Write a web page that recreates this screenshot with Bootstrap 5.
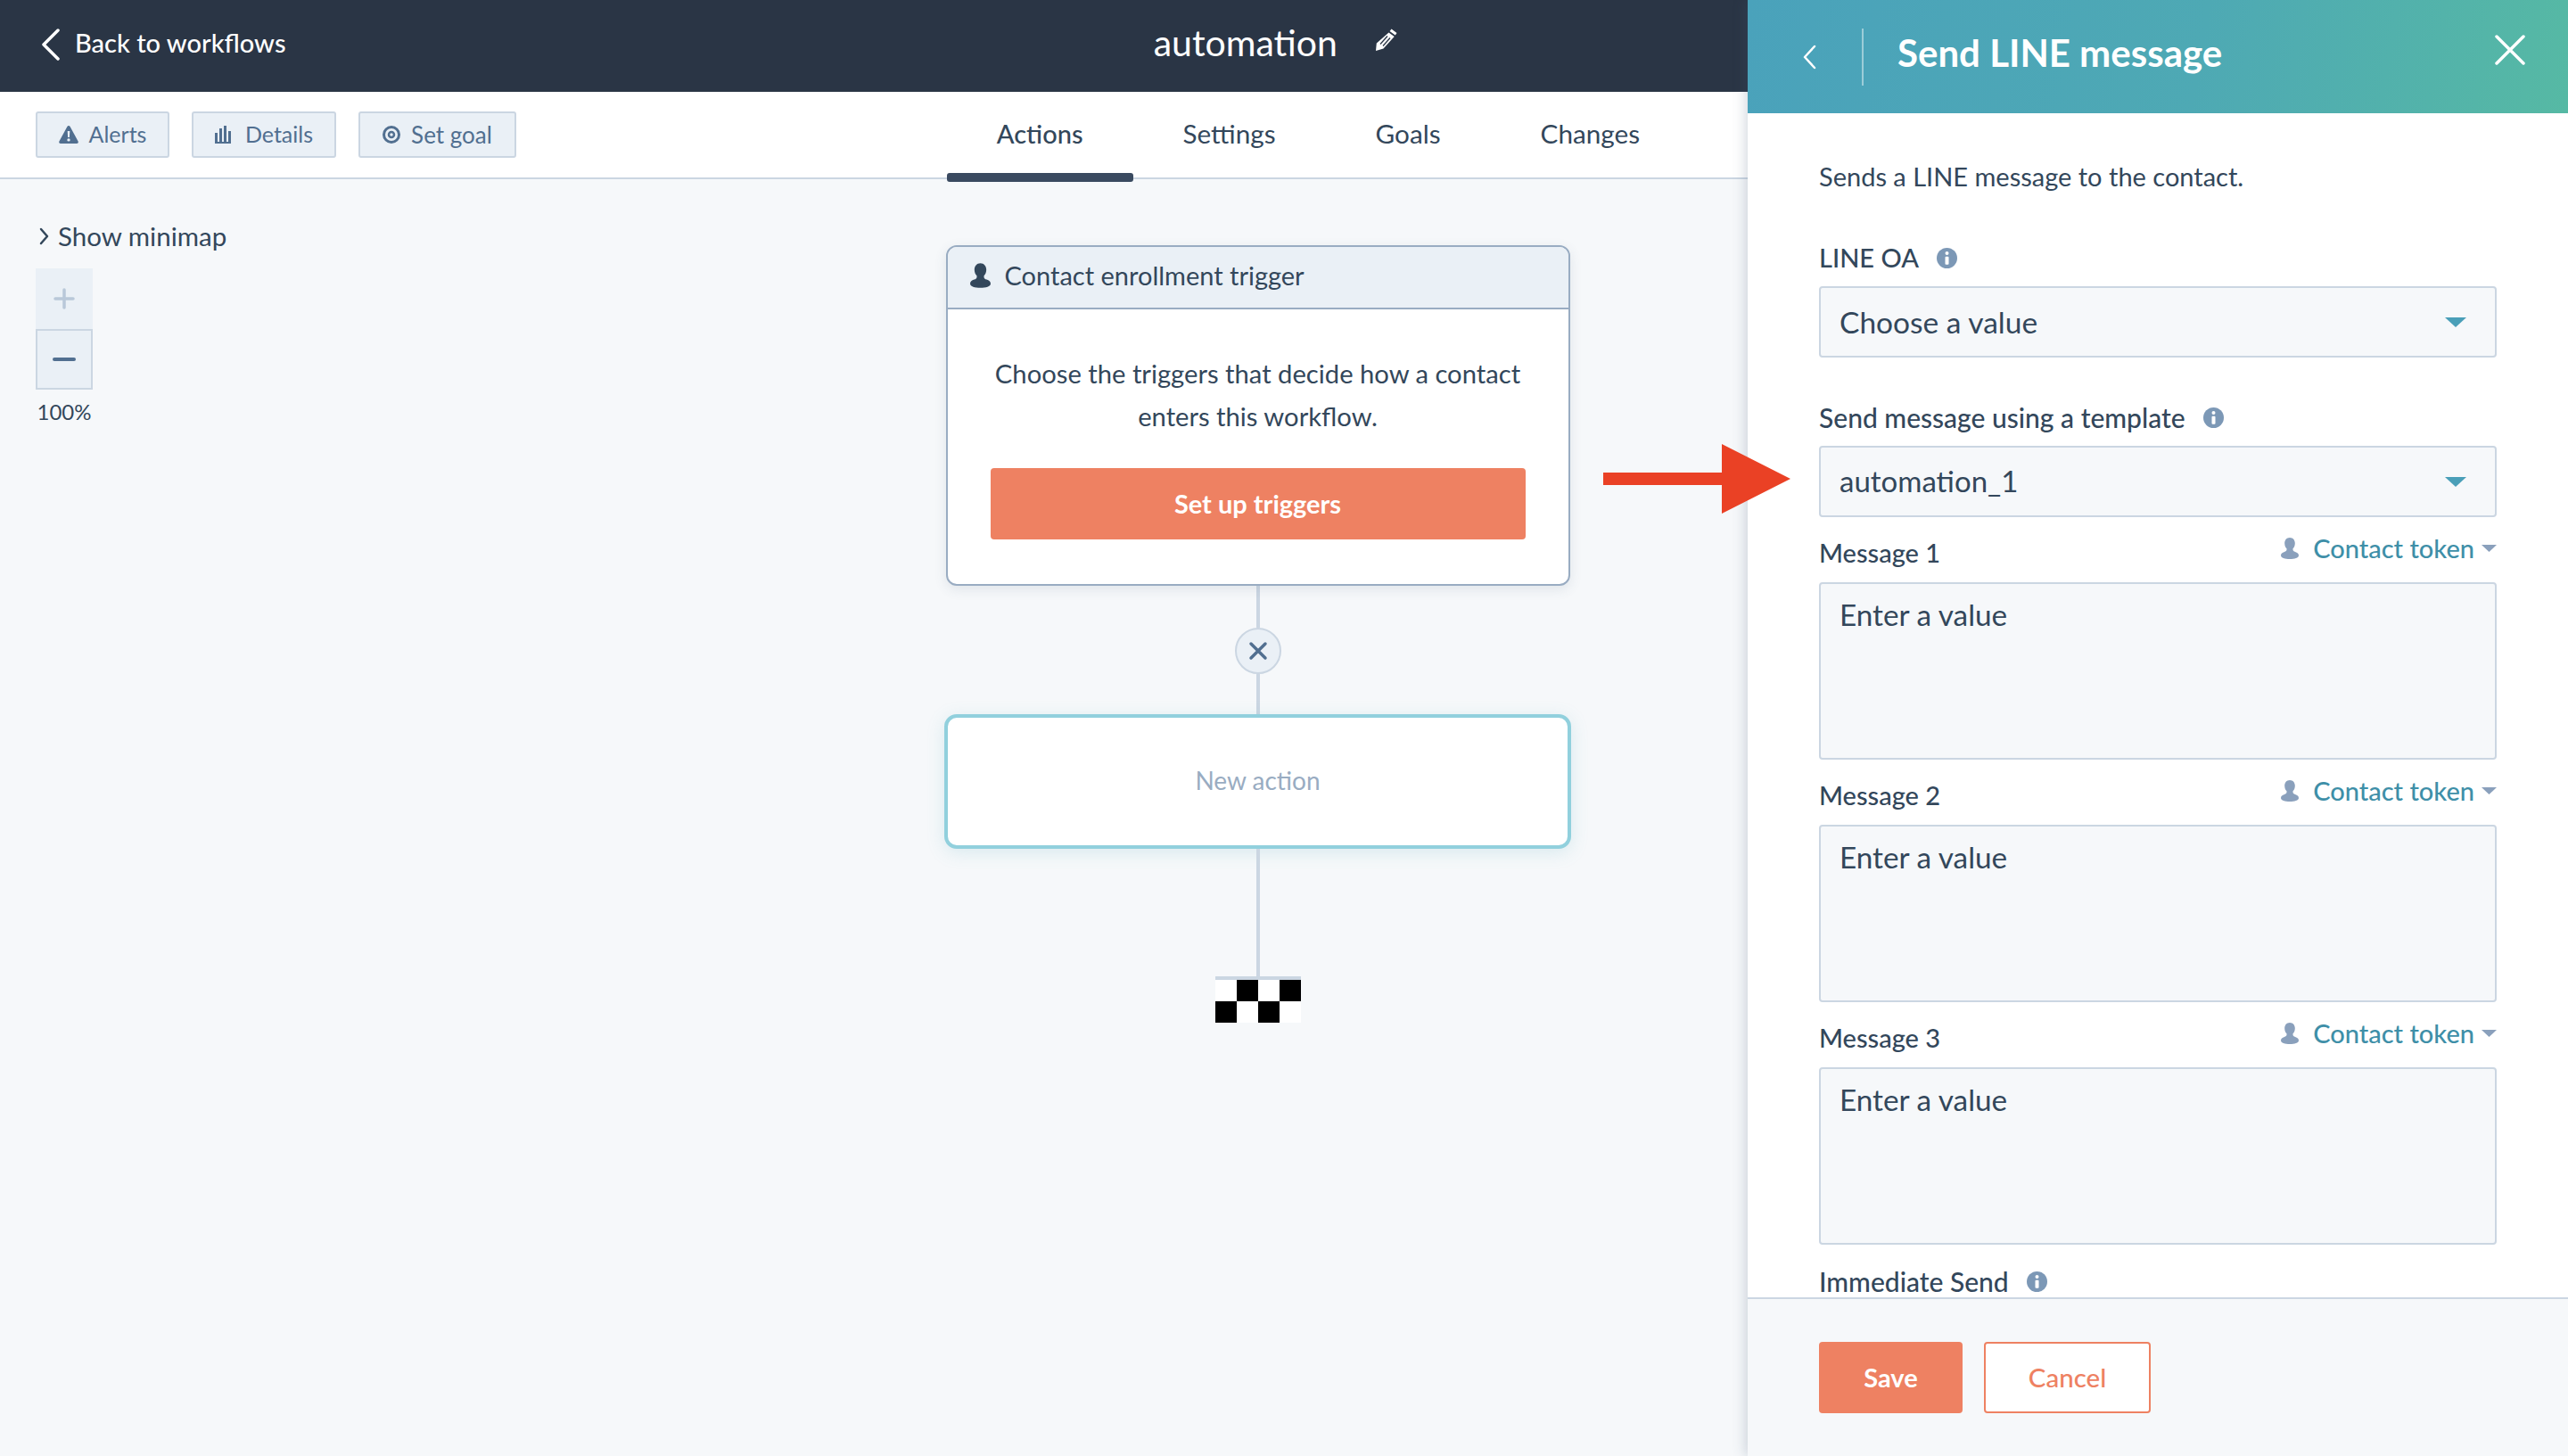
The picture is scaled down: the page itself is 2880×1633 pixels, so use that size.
<!DOCTYPE html>
<html lang="en">
<head>
  <meta charset="UTF-8">
  <title>automation</title>
  <link href="https://cdn.jsdelivr.net/npm/bootstrap@5.3.0/dist/css/bootstrap.min.css" rel="stylesheet">
  <style>
    body {
      font-family: Lato, "Liberation Sans", sans-serif;
      color: #33475b;
      background: #f6f8fa;
      height: 1633px;
      overflow: hidden;
      position: relative;
    }
    .wf-main { width: 1960px; height: 1633px; }
    .wf-top { height: 103px; background: #2a3545; color: #fff; padding-left: 46px; padding-right: 393px; }
    .wf-back { font-size: 29px; font-weight: 500; color: #fff; text-decoration: none; padding-bottom: 8px; }
    .wf-back svg { margin: 5px 16px 0 0; }
    .wf-title { font-size: 41px; margin-right: 42px; padding-bottom: 8px; }
    .wf-top .wf-pen { margin-bottom: 14px; }
    .wf-toolbar { height: 98px; background: #fff; border-bottom: 2px solid #cbd6e2; padding-left: 40px; padding-right: 65px; }
    .wf-tool {
      height: 52px; padding: 0; font-size: 25px; color: #516f90; background: #eaf0f6;
      border: 2px solid #cbd6e2; border-radius: 3px; margin-right: 25px; gap: 12px;
    }
    .wf-tool:hover { color: #516f90; background: #eaf0f6; border-color: #cbd6e2; }
    .wf-tool-alerts { width: 150px; }
    .wf-tool-details { width: 162px; gap: 16px; }
    .wf-tool-goal { width: 177px; font-size: 26px; }
    .wf-tabs { height: 96px; }
    .wf-tab { padding: 0 56px; font-size: 29.700px; color: #33475b; height: 96px; line-height: 94px; position: relative; }
    .wf-tab.on { font-size: 29px; font-weight: 500; }
    .wf-tab.on::after {
      content: ""; position: absolute; left: 0; right: 0; bottom: -5px; height: 10px;
      background: #3a4a60; border-radius: 3px;
    }
    .wf-canvas { flex: 1; }
    .wf-side { width: 1059px; padding-left: 44px; padding-top: 44px; }
    .wf-mini { font-size: 29.500px; line-height: 40px; gap: 10px; margin-bottom: 16px; }
    .wf-zoom { width: 64px; height: 68px; background: #eaf0f6; margin-left: -4px; }
    .wf-zoom.on { border: 2px solid #cbd6e2; }
    .wf-pct { width: 64px; font-size: 24px; line-height: 30px; margin: 10px 0 0 -4px; text-align: center; }
    .wf-flow { width: 703px; padding-top: 74px; }
    .wf-card {
      width: 700px; height: 382px; border: 2px solid #99acc2; border-radius: 12px;
      box-shadow: 0 4px 14px rgba(66, 91, 118, .12); overflow: hidden;
    }
    .wf-card .card-header {
      height: 70px; background: #eaf0f6; border-bottom: 2px solid #99acc2; border-radius: 0;
      font-size: 29px; padding: 0 0 4px 25px; gap: 16px;
    }
    .wf-card .card-body { padding: 0 48px; text-align: center; font-size: 29.200px; line-height: 48px; }
    .wf-card p { margin: 48px 0 34px; }
    .wf-orange {
      background: #ee8162; border: 0; color: #fff; font-weight: 700; font-size: 29px; border-radius: 4px;
    }
    .wf-orange:hover { background: #ee8162; color: #fff; }
    .wf-setup { width: 600px; height: 80px; padding-bottom: 6px; }
    .wf-line { width: 4px; background: #cbd6e2; }
    .wf-dot {
      width: 52px; height: 52px; border: 2px solid #cbd6e2; background: #eaf0f6; border-radius: 50%;
    }
    .wf-new {
      width: 703px; height: 151px; background: #fff; border: 4px solid #91d0dd; border-radius: 14px; padding-bottom: 3px;
      box-shadow: 0 4px 20px rgba(81, 170, 190, .18); font-size: 28px; color: #99acc2;
    }
    .wf-flag { width: 96px; height: 52px; display: block; }
    .wf-panel {
      width: 920px; height: 1633px; background: #fff; box-shadow: -2px 0 14px rgba(66, 91, 118, .25); z-index: 2;
    }
    .wf-phead {
      height: 127px; background: linear-gradient(100deg, #4aa2bb 0%, #4ea9b4 55%, #56b9a4 100%); color: #fff;
      padding-left: 61px; padding-right: 48px;
    }
    .wf-sep { width: 2px; height: 64px; background: rgba(255, 255, 255, .45); margin: 0 38px 0 51px; }
    .wf-ptitle { font-size: 42px; font-weight: 700; margin: 0 0 10px; line-height: 1; }
    .wf-close { margin-bottom: 16px; }
    .wf-pbody { flex: 1; padding: 52px 80px 0; overflow: hidden; }
    .wf-desc { font-size: 29px; line-height: 38px; margin-bottom: 52px; }
    .wf-lbl { font-size: 29px; line-height: 40px; font-weight: 500; gap: 20px; }
    .wf-lbl.wide { font-size: 30px; }
    .wf-pick {
      height: 80px; border: 2px solid #cbd6e2; background-color: #f6f8fa; border-radius: 4px; color: #33475b;
      font-size: 33.500px; padding: 0 60px 0 21px; margin-top: 12px; margin-bottom: 47px; box-shadow: none;
      background-image: url("data:image/svg+xml,%3Csvg xmlns='http://www.w3.org/2000/svg' width='24' height='11'%3E%3Cpath d='M0 0h24L12 11z' fill='%234a9fb8'/%3E%3C/svg%3E");
      background-size: 24px 11px; background-position: right 32px center;
    }
    .wf-pick.last { margin-bottom: 20px; font-size: 33px; }
    .wf-msghead { height: 40px; margin-bottom: 13px; }
    .wf-token { font-size: 29px; font-weight: 500; line-height: 30px; color: #3e8fa8; text-decoration: none; }
    .wf-text {
      height: 199px; border: 2px solid #cbd6e2; background: #f6f8fa; border-radius: 4px; font-size: 33.300px;
      padding: 10px 21px; margin-bottom: 20px; resize: none; color: #33475b;
    }
    .wf-text::placeholder { color: #33475b; opacity: 1; }
    .wf-imm { margin-top: 24px; font-size: 30px; line-height: 34px; }
    .wf-pfoot { height: 178px; border-top: 2px solid #cbd6e2; background: #f6f8fa; padding: 48px 80px 0; gap: 24px; }
    .wf-save { width: 161px; height: 80px; }
    .wf-cancel {
      width: 187px; height: 80px; border: 2px solid #ee8162; background: #fff; color: #ee8162; font-size: 29.500px;
      font-weight: 500; border-radius: 4px;
    }
    .wf-cancel:hover { background: #fff; color: #ee8162; border-color: #ee8162; }
    .wf-arrow { position: absolute; left: 1798px; top: 498px; z-index: 3; display: block; }
  </style>
</head>
<body>
<svg width="0" height="0" class="position-absolute">
  <symbol id="ico-person" viewBox="0 0 20 24">
    <path d="M10 0c3.600 0 5.800 2.800 5.800 6.400 0 2.600-1 4.600-2.300 5.800v1.300c0 1.300 1 2 2.600 2.500C18.400 16.800 20 17.800 20 20c0 2.600-4.700 4-10 4S0 22.600 0 20c0-2.200 1.600-3.200 3.900-4 1.600-.5 2.600-1.200 2.600-2.500v-1.300C5.200 11 4.200 9 4.200 6.400 4.200 2.800 6.400 0 10 0z"/>
  </symbol>
  <symbol id="ico-info" viewBox="0 0 23 23">
    <circle cx="11.500" cy="11.500" r="11.500" fill="#7c98b6"/>
    <rect x="9.500" y="4" width="4" height="4" rx="2" fill="#fff"/>
    <rect x="9.500" y="9.800" width="4" height="9" rx="1" fill="#fff"/>
  </symbol>
</svg>

<div class="d-flex">
  <div class="wf-main d-flex flex-column">
    <header class="wf-top d-flex align-items-center">
      <a href="#" class="wf-back d-flex align-items-center">
        <svg width="22" height="36" viewBox="0 0 22 36" fill="none" stroke="#fff" stroke-width="3.500" stroke-linecap="round" stroke-linejoin="round"><path d="M19 2 3 18l16 16"/></svg>
        Back to workflows
      </a>
      <div class="ms-auto d-flex align-items-center">
        <span class="wf-title">automation</span>
        <svg class="wf-pen" width="25" height="25" viewBox="0 0 25 25"><path fill="#fff" d="M18.500 0.500 24.500 5 22.800 7.500 16.600 3zM15.500 4.500 21.700 9 9.500 22.500 1 25l.8-8.500z"/><path d="M14 8.500 6 17.500M17 10.500 9 19.500" stroke="#2a3545" stroke-width="1.300"/></svg>
      </div>
    </header>

    <div class="wf-toolbar d-flex align-items-center">
      <button class="btn wf-tool wf-tool-alerts d-flex align-items-center justify-content-center" type="button">
        <svg width="22" height="20" viewBox="0 0 22 20"><path fill="#516f90" fill-rule="evenodd" d="M11 0c.7 0 1.200.4 1.600 1.100l9 16.300c.6 1.200-.1 2.600-1.500 2.600H1.900C.5 20-.2 18.600.4 17.400l9-16.300C9.800.4 10.300 0 11 0zM9.700 6l.4 7h1.800l.4-7zM11 14.200a1.700 1.700 0 1 0 0 3.400 1.700 1.700 0 0 0 0-3.400z"/></svg>
        Alerts
      </button>
      <button class="btn wf-tool wf-tool-details d-flex align-items-center justify-content-center" type="button">
        <svg width="18" height="20" viewBox="0 0 18 20" fill="#516f90"><rect x="0" y="8" width="3" height="12"/><rect x="5" y="3" width="3" height="17"/><rect x="10" y="0" width="3" height="20"/><rect x="15" y="6" width="3" height="14"/><rect x="0" y="18" width="18" height="2"/></svg>
        Details
      </button>
      <button class="btn wf-tool wf-tool-goal d-flex align-items-center justify-content-center" type="button">
        <svg width="20" height="20" viewBox="0 0 20 20" fill="none" stroke="#516f90"><circle cx="10" cy="10" r="8.500" stroke-width="3"/><circle cx="10" cy="10" r="3" stroke-width="2.500"/></svg>
        Set goal
      </button>
      <nav class="wf-tabs nav ms-auto flex-nowrap">
        <div class="wf-tab on">Actions</div>
        <div class="wf-tab">Settings</div>
        <div class="wf-tab">Goals</div>
        <div class="wf-tab">Changes</div>
      </nav>
    </div>

    <div class="wf-canvas d-flex">
      <div class="wf-side">
        <div class="wf-mini d-flex align-items-center">
          <svg width="11" height="20" viewBox="0 0 11 20" fill="none" stroke="#33475b" stroke-width="2.500" stroke-linecap="round" stroke-linejoin="round"><path d="m2 2 7 8-7 8"/></svg>
          Show minimap
        </div>
        <div class="wf-zoom d-flex align-items-center justify-content-center">
          <svg width="24" height="24" viewBox="0 0 24 24" stroke="#b9c8d9" stroke-width="3.500" stroke-linecap="round"><path d="M12 2v20M2 12h20"/></svg>
        </div>
        <div class="wf-zoom on d-flex align-items-center justify-content-center">
          <svg width="26" height="6" viewBox="0 0 26 6" stroke="#516f90" stroke-width="4" stroke-linecap="round"><path d="M2 3h22"/></svg>
        </div>
        <div class="wf-pct">100%</div>
      </div>

      <div class="wf-flow d-flex flex-column align-items-center">
        <div class="card wf-card">
          <div class="card-header d-flex align-items-center">
            <svg width="23" height="28" fill="#33475b"><use href="#ico-person"/></svg>
            Contact enrollment trigger
          </div>
          <div class="card-body">
            <p>Choose the triggers that decide how a contact enters this workflow.</p>
            <button class="btn wf-orange wf-setup" type="button">Set up triggers</button>
          </div>
        </div>
        <div class="wf-line" style="height: 47px"></div>
        <div class="wf-dot d-flex align-items-center justify-content-center">
          <svg width="22" height="22" viewBox="0 0 22 22" stroke="#516f90" stroke-width="3.500" stroke-linecap="round"><path d="m3 3 16 16M19 3 3 19"/></svg>
        </div>
        <div class="wf-line" style="height: 45px"></div>
        <div class="wf-new d-flex align-items-center justify-content-center">New action</div>
        <div class="wf-line" style="height: 143px"></div>
        <svg class="wf-flag" viewBox="0 0 96 52">
          <rect width="96" height="52" fill="#fff"/>
          <rect width="96" height="4" fill="#cbd6e2"/>
          <rect x="24" y="4" width="24" height="24"/><rect x="72" y="4" width="24" height="24"/>
          <rect x="0" y="28" width="24" height="24"/><rect x="48" y="28" width="24" height="24"/>
        </svg>
      </div>
    </div>
  </div>

  <aside class="wf-panel d-flex flex-column">
    <div class="wf-phead d-flex align-items-center">
      <svg width="16" height="28" viewBox="0 0 16 28" fill="none" stroke="#fff" stroke-width="2.500" stroke-linecap="round" stroke-linejoin="round"><path d="M14 2 3 14l11 12"/></svg>
      <div class="wf-sep"></div>
      <h2 class="wf-ptitle">Send LINE message</h2>
      <svg class="wf-close ms-auto" width="34" height="34" viewBox="0 0 34 34" stroke="#fff" stroke-width="3.500" stroke-linecap="round"><path d="m2 2 30 30M32 2 2 32"/></svg>
    </div>

    <div class="wf-pbody">
      <div class="wf-desc">Sends a LINE message to the contact.</div>

      <label class="wf-lbl d-flex align-items-center">LINE OA <svg width="23" height="23"><use href="#ico-info"/></svg></label>
      <select class="form-select wf-pick"><option>Choose a value</option></select>

      <label class="wf-lbl wide d-flex align-items-center">Send message using a template <svg width="23" height="23"><use href="#ico-info"/></svg></label>
      <select class="form-select wf-pick last"><option>automation_1</option></select>

      <div class="wf-msghead d-flex justify-content-between align-items-start">
        <span class="wf-lbl">Message 1</span>
        <a href="#" class="wf-token d-flex align-items-center">
          <svg class="me-3" width="20" height="24" fill="#8aa0bc"><use href="#ico-person"/></svg>
          Contact token
          <svg class="ms-2" width="17" height="8" viewBox="0 0 17 8"><path d="M0 0h17L8.500 8z" fill="#8aa0bc"/></svg>
        </a>
      </div>
      <textarea class="form-control wf-text" placeholder="Enter a value"></textarea>

      <div class="wf-msghead d-flex justify-content-between align-items-start">
        <span class="wf-lbl">Message 2</span>
        <a href="#" class="wf-token d-flex align-items-center">
          <svg class="me-3" width="20" height="24" fill="#8aa0bc"><use href="#ico-person"/></svg>
          Contact token
          <svg class="ms-2" width="17" height="8" viewBox="0 0 17 8"><path d="M0 0h17L8.500 8z" fill="#8aa0bc"/></svg>
        </a>
      </div>
      <textarea class="form-control wf-text" placeholder="Enter a value"></textarea>

      <div class="wf-msghead d-flex justify-content-between align-items-start">
        <span class="wf-lbl">Message 3</span>
        <a href="#" class="wf-token d-flex align-items-center">
          <svg class="me-3" width="20" height="24" fill="#8aa0bc"><use href="#ico-person"/></svg>
          Contact token
          <svg class="ms-2" width="17" height="8" viewBox="0 0 17 8"><path d="M0 0h17L8.500 8z" fill="#8aa0bc"/></svg>
        </a>
      </div>
      <textarea class="form-control wf-text mb-0" placeholder="Enter a value"></textarea>

      <label class="wf-lbl wf-imm d-flex align-items-center">Immediate Send <svg width="23" height="23"><use href="#ico-info"/></svg></label>
    </div>

    <div class="wf-pfoot d-flex align-items-start">
      <button class="btn wf-orange wf-save" type="button">Save</button>
      <button class="btn wf-cancel" type="button">Cancel</button>
    </div>
  </aside>
</div>

<!-- red annotation arrow over the page -->
<svg class="wf-arrow" width="210" height="78" viewBox="0 0 210 78"><path d="M0 32h133V0l77 39-77 39V46H0z" fill="#ea4125"/></svg>

</body>
</html>
